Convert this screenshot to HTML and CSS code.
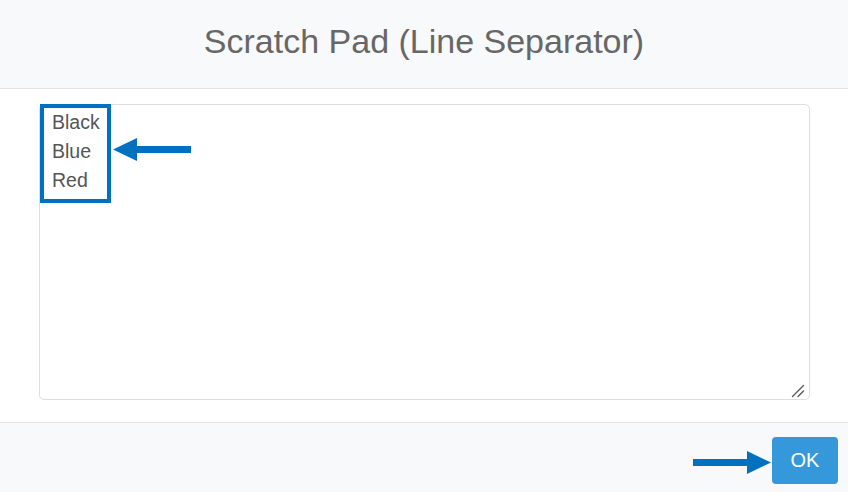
FILE: index.html
```html
<!DOCTYPE html>
<html>
<head>
<meta charset="utf-8">
<link rel="stylesheet" href="styles.css">
</head>
<body>
<div class="modal">
  <div class="modal-header">
    <h4 class="modal-title">Scratch Pad (Line Separator)</h4>
  </div>
  <div class="modal-body">
    <textarea class="pad">Black
Blue
Red</textarea>
  </div>
  <div class="modal-footer">
    <button class="btn-ok">OK</button>
  </div>
  <svg class="grip" width="16" height="16" viewBox="0 0 16 16">
    <path d="M2.5 14.5 L13.5 3.5 M8 14.5 L13.5 9" stroke="#5a5a5a" stroke-width="1.4" stroke-linecap="round" fill="none"/>
  </svg>
  <div class="note-box"></div>
  <svg class="arrow arrow-left" width="80" height="26" viewBox="0 0 80 26">
    <polygon fill="#0070c0" points="0,12.5 24,1 24,9 78,9 78,16 24,16 24,24"/>
  </svg>
  <svg class="arrow arrow-right" width="80" height="26" viewBox="0 0 80 26">
    <polygon fill="#0070c0" points="78,12.5 54,1 54,9 0,9 0,16 54,16 54,24"/>
  </svg>
</div>
</body>
</html>
```
FILE: styles.css
```css
html, body {
  margin: 0;
  padding: 0;
  background: #ffffff;
}
.modal {
  position: relative;
  width: 848px;
  height: 492px;
  overflow: hidden;
  font-family: "Liberation Sans", Arial, sans-serif;
}
.modal-header {
  box-sizing: border-box;
  height: 89px;
  background: #f8f9fa;
  border-bottom: 1px solid #e3e4e6;
  padding-top: 22px;
  text-align: center;
}
.modal-title {
  margin: 0;
  font-weight: normal;
  font-size: 34px;
  line-height: 38px;
  color: #676767;
}
.modal-body {
  padding: 15px 38px 22px 39px;
}
.pad {
  display: block;
  box-sizing: border-box;
  width: 771px;
  height: 296px;
  margin: 0;
  border: 1px solid #dedede;
  border-radius: 5px;
  padding: 3px 12px;
  font-family: "Liberation Sans", Arial, sans-serif;
  font-size: 19.5px;
  line-height: 29px;
  color: #555555;
  background: #ffffff;
  resize: none;
  outline: none;
}
.modal-footer {
  box-sizing: border-box;
  height: 70px;
  background: #f8f9fa;
  border-top: 1px solid #e3e4e6;
  padding: 14px 10px 0 0;
  display: flex;
  justify-content: flex-end;
  align-items: flex-start;
}
.btn-ok {
  width: 66px;
  height: 47px;
  border: none;
  border-radius: 4px;
  background: #3598db;
  color: #ffffff;
  font-family: "Liberation Sans", Arial, sans-serif;
  font-size: 20px;
  padding: 0;
}
.grip {
  position: absolute;
  left: 790px;
  top: 382px;
  display: block;
}
.note-box {
  position: absolute;
  left: 40px;
  top: 104px;
  width: 71px;
  height: 99px;
  box-sizing: border-box;
  border: 4px solid #0070c0;
}
.arrow {
  position: absolute;
  display: block;
}
.arrow-left {
  left: 113px;
  top: 137px;
}
.arrow-right {
  left: 693px;
  top: 450px;
}
```
